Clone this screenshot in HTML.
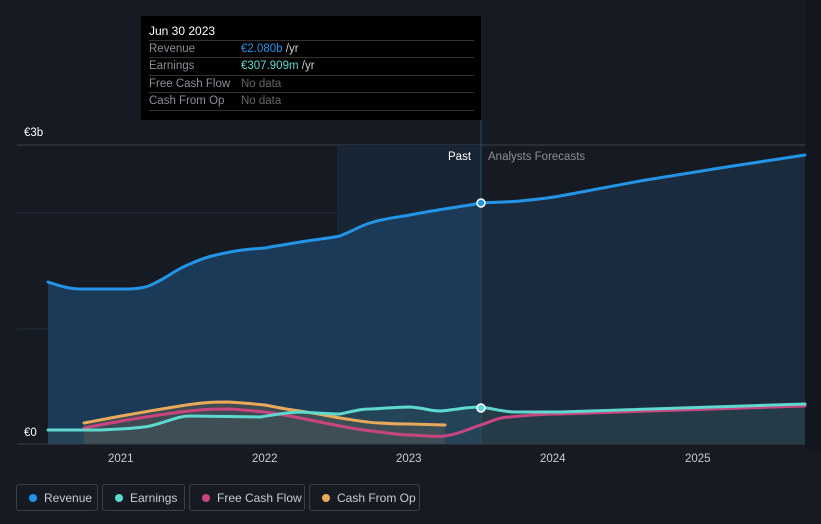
<!DOCTYPE html>
<html><head><style>
body{margin:0;width:821px;height:524px;background:#151a23;font-family:"Liberation Sans",sans-serif;overflow:hidden;position:relative}
.tt{position:absolute;left:141px;top:16px;width:340px;height:104px;background:#000;color:#fff;font-size:11.5px}
.tt .h{position:absolute;left:8px;top:8px;font-size:12px}
.row{position:absolute;left:8px;width:325px;height:17px;border-top:1px solid #333;color:#8a8f98;line-height:17px}
.row span{position:absolute;left:92px}
.leg{position:absolute;top:484px;height:27px;border:1px solid #3a3f48;border-radius:3px;color:#c8ccd2;font-size:12px;line-height:26px;box-sizing:border-box;white-space:nowrap}
.leg i{position:absolute;left:12px;top:9px;width:8px;height:8px;border-radius:50%}
.leg b{font-weight:normal;position:absolute;left:27px;white-space:nowrap}
</style></head><body>
<svg width="821" height="524" style="position:absolute;left:0;top:0">
<defs><clipPath id="past"><rect x="0" y="0" width="481" height="450"/></clipPath><clipPath id="fut"><rect x="481" y="0" width="340" height="450"/></clipPath></defs>
<rect x="805" y="0" width="16" height="450" fill="#12171f"/>
<line x1="17" y1="145" x2="805" y2="145" stroke="#3a404a"/>
<line x1="17" y1="213" x2="805" y2="213" stroke="#262d38"/>
<line x1="17" y1="329" x2="805" y2="329" stroke="#262d38"/>
<rect x="337" y="145" width="144" height="299" fill="#182535"/>
<path clip-path="url(#past)" d="M48,282 C60,286 70,289 80,289 L125,289 C140,289 148,287 155,283 C170,276 178,268 190,264 C205,257 215,255 230,252 C245,249 255,249 265,248 C280,245 290,244 300,242 C320,239 330,238 340,236 C355,230 360,226 370,223 C385,218 400,217 410,215 C440,209 460,207 481,203 L481,444 L48,444Z" fill="#1a3a58"/>
<path clip-path="url(#fut)" d="M481,203 C500,202 510,202 520,201 C540,199 550,198 560,196 L640,181 L720,168 L805,155 L805,444 L481,444Z" fill="#1b2b3e"/>
<line x1="481" y1="120" x2="481" y2="444" stroke="#2c4a66"/>
<path d="M84,444 L84,423 C110,418 130,414 180,406 C205,402 215,402 228,402 C245,403 255,404 265,405 C280,408 290,410 300,411 C320,414 330,416 340,418 C360,421 370,423 380,423 C395,424 400,424 410,424 L445,425 L445,444Z" fill="#5a5550" fill-opacity="0.6"/>
<path d="M48,444 L48,430 L100,430 C125,429 140,428 150,426 C170,421 178,416 190,416 L260,417 C280,414 290,412 300,412 C320,413 330,414 340,414 C355,411 360,409 370,409 C390,408 400,407 410,407 C425,408 430,411 440,411 C455,410 465,407 481,407 C495,409 505,412 515,412 L560,412 L805,404 L805,444Z" fill="#3a5a5a" fill-opacity="0.35"/>
<g fill="none" stroke-width="3" stroke-linecap="round">
<path d="M84,423 C110,418 130,414 180,406 C205,402 215,402 228,402 C245,403 255,404 265,405 C280,408 290,410 300,411 C320,414 330,416 340,418 C360,421 370,423 380,423 C395,424 400,424 410,424 L445,425" stroke="#e8a95a"/>
<path d="M84,428 C110,423 130,419 180,412 C205,409 215,409 230,409 C245,410 255,411 265,412 C280,414 290,416 300,418 C320,422 330,424 340,426 C360,430 370,431 380,432 C395,434 400,435 410,435 C430,436 440,437 445,436 C460,434 470,428 481,425 C495,420 500,417 510,417 C530,415 545,414 560,414 L805,406" stroke="#c9457f"/>
<path d="M48,430 L100,430 C125,429 140,428 150,426 C170,421 178,416 190,416 L260,417 C280,414 290,412 300,412 C320,413 330,414 340,414 C355,411 360,409 370,409 C390,408 400,407 410,407 C425,408 430,411 440,411 C455,410 465,407 481,407 C495,409 505,412 515,412 L560,412 L805,404" stroke="#5fd8cf"/>
<path d="M48,282 C60,286 70,289 80,289 L125,289 C140,289 148,287 155,283 C170,276 178,268 190,264 C205,257 215,255 230,252 C245,249 255,249 265,248 C280,245 290,244 300,242 C320,239 330,238 340,236 C355,230 360,226 370,223 C385,218 400,217 410,215 C440,209 460,207 481,203 C500,202 510,202 520,201 C540,199 550,198 560,196 L640,181 L720,168 L805,155" stroke="#2394e6"/>
</g>
<circle cx="481" cy="203" r="4" fill="#2394e6" stroke="#fff" stroke-width="1.5"/>
<circle cx="481" cy="408" r="4" fill="#5fd8cf" stroke="#fff" stroke-width="1.5"/>
<line x1="17" y1="444" x2="805" y2="444" stroke="#3a404a"/>
<g fill="#c8ccd2" font-size="11.5" font-family="Liberation Sans">
<text x="24" y="136" fill="#fff">€3b</text>
<text x="24" y="436" fill="#fff">€0</text>
<text x="108" y="462">2021</text><text x="252" y="462">2022</text><text x="396" y="462">2023</text><text x="540" y="462">2024</text><text x="685" y="462">2025</text>
<text x="448" y="160" fill="#fff">Past</text>
<text x="488" y="160" fill="#8a8f98">Analysts Forecasts</text>
</g>
</svg>
<div class="tt"><div class="h">Jun 30 2023</div>
<div class="row" style="top:24px">Revenue<span><a style="color:#2394e6">€2.080b</a> <a style="color:#ccc">/yr</a></span></div>
<div class="row" style="top:41px">Earnings<span><a style="color:#5fd8cf">€307.909m</a> <a style="color:#ccc">/yr</a></span></div>
<div class="row" style="top:59px">Free Cash Flow<span style="color:#666">No data</span></div>
<div class="row" style="top:76px;border-bottom:1px solid #333">Cash From Op<span style="color:#666">No data</span></div>
</div>
<div class="leg" style="left:16px;width:82px"><i style="background:#2394e6"></i><b>Revenue</b></div>
<div class="leg" style="left:102px;width:83px"><i style="background:#5fd8cf"></i><b>Earnings</b></div>
<div class="leg" style="left:189px;width:116px"><i style="background:#c9457f"></i><b>Free Cash Flow</b></div>
<div class="leg" style="left:309px;width:111px"><i style="background:#e8a95a"></i><b>Cash From Op</b></div>
</body></html>
